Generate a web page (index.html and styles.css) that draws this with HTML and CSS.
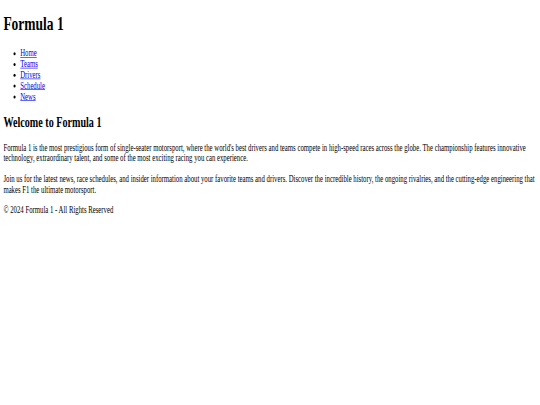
FILE: index.html
```html
<!DOCTYPE html>
<html lang="en">
<head>
<meta charset="utf-8">
<title>Formula 1</title>
<link rel="stylesheet" href="styles.css">
</head>
<body>
<div class="frame">
  <div class="viewport">
    <div class="content">
      <header>
        <h1>Formula 1</h1>
        <nav>
          <ul>
            <li><a href="#">Home</a></li>
            <li><a href="#">Teams</a></li>
            <li><a href="#">Drivers</a></li>
            <li><a href="#">Schedule</a></li>
            <li><a href="#">News</a></li>
          </ul>
        </nav>
      </header>
      <main>
        <h2>Welcome to Formula 1</h2>
        <p>Formula 1 is the most prestigious form of single-seater motorsport, where the world's best drivers and teams compete in high-speed races across the globe. The championship features innovative technology, extraordinary talent, and some of the most exciting racing you can experience.</p>
        <p>Join us for the latest news, race schedules, and insider information about your favorite teams and drivers. Discover the incredible history, the ongoing rivalries, and the cutting-edge engineering that makes F1 the ultimate motorsport.</p>
      </main>
      <footer>
        <p>&copy; 2024 Formula 1 - All Rights Reserved</p>
      </footer>
    </div>
  </div>
</div>
</body>
</html>
```
FILE: styles.css
```css
html, body {
  margin: 0;
  padding: 0;
  background: #ffffff;
}

.frame {
  width: 540px;
  height: 405px;
  overflow: hidden;
}

.viewport {
  display: flow-root;
  width: 1280px;
  transform: scale(0.421875, 0.6);
  transform-origin: 0 0;
  font-family: "Liberation Serif", "Times New Roman", serif;
  font-size: 16px;
  color: #000000;
}

.content {
  margin: 8px;
}

h1 {
  font-size: 32px;
  font-weight: bold;
  margin: 21.44px 0;
}

h2 {
  font-size: 24px;
  font-weight: bold;
  margin: 19.92px 0;
}

ul {
  margin: 16px 0;
  padding-left: 40px;
  list-style: disc;
}

p {
  margin: 16px 0;
}

a {
  color: #0000ee;
  text-decoration: underline;
}
```
